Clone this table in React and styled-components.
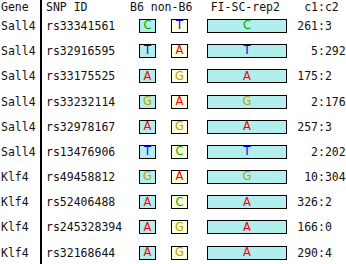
import React from "react";
import styled, { createGlobalStyle } from "styled-components";

const Global = createGlobalStyle`
  html, body { margin: 0; padding: 0; background: #fff; }
  body {
    font-family: "DejaVu Sans Mono", monospace;
    font-size: 11.5px;
    color: #111;
    overflow: hidden;
  }
`;

const Table = styled.div`
  display: flex;
  flex-direction: column;
  width: 346px;
  height: 264px;
`;

const Row = styled.div`
  display: flex;
  align-items: stretch;
  height: ${(p) => p.$h}px;
  flex: none;
`;

const Gene = styled.div`
  width: 39px;
  padding-left: 1px;
  border-right: 2px solid #000;
  display: flex;
  align-items: center;
  white-space: nowrap;
`;

const Cell = styled.div`
  width: ${(p) => p.$w}px;
  padding-left: ${(p) => p.$pl || 0}px;
  box-sizing: border-box;
  display: flex;
  align-items: center;
  white-space: nowrap;
  flex: none;
`;

const Base = styled.div`
  box-sizing: border-box;
  width: ${(p) => p.$w}px;
  height: 14px;
  border: 1px solid #000;
  background: ${(p) => p.$bg};
  display: flex;
  align-items: center;
  justify-content: center;
  font-family: "DejaVu Sans", sans-serif;
  font-size: 11.5px;
  line-height: 1;
  color: ${(p) => p.$fg};
`;

const Count = styled.div`
  display: grid;
  grid-template-columns: 31px auto auto;
  align-items: center;
  white-space: nowrap;
`;

const Left = styled.span`
  text-align: right;
`;

const COLORS = { A: "#f00000", C: "#00b000", G: "#b4a400", T: "#0000f0" };
const CYAN = "#b2eeee";
const YELLOW = "#ffffe0";

const rows = [
  ["Sall4", "rs33341561", "C", "T", "C", "261", "3"],
  ["Sall4", "rs32916595", "T", "A", "T", "5", "292"],
  ["Sall4", "rs33175525", "A", "G", "A", "175", "2"],
  ["Sall4", "rs33232114", "G", "A", "G", "2", "176"],
  ["Sall4", "rs32978167", "A", "G", "A", "257", "3"],
  ["Sall4", "rs13476906", "T", "C", "T", "2", "202"],
  ["Klf4", "rs49458812", "G", "A", "G", "10", "304"],
  ["Klf4", "rs52406488", "A", "C", "A", "326", "2"],
  ["Klf4", "rs245328394", "A", "G", "A", "166", "0"],
  ["Klf4", "rs32168644", "A", "G", "A", "290", "4"],
];

function Counts({ a, b }) {
  return (
    <Count>
      <Left>{a}</Left>
      <span>:</span>
      <span>{b}</span>
    </Count>
  );
}

export default function App() {
  return (
    <>
      <Global />
      <Table>
        <Row $h={13.4}>
          <Gene>Gene</Gene>
          <Cell $w={88} $pl={4}>SNP ID</Cell>
          <Cell $w={80.7}>B6 non-B6</Cell>
          <Cell $w={76.3}>FI-SC-rep2</Cell>
          <Counts a="c1" b="c2" />
        </Row>
        {rows.map(([g, id, b6, nb6, rep, c1, c2]) => (
          <Row $h={25.2} key={id}>
            <Gene>{g}</Gene>
            <Cell $w={97} $pl={4}>{id}</Cell>
            <Cell $w={32}>
              <Base $w={17} $bg={CYAN} $fg={COLORS[b6]}>{b6}</Base>
            </Cell>
            <Cell $w={36}>
              <Base $w={17} $bg={YELLOW} $fg={COLORS[nb6]}>{nb6}</Base>
            </Cell>
            <Cell $w={80}>
              <Base $w={80} $bg={CYAN} $fg={COLORS[rep]}>{rep}</Base>
            </Cell>
            <Counts a={c1} b={c2} />
          </Row>
        ))}
      </Table>
    </>
  );
}
